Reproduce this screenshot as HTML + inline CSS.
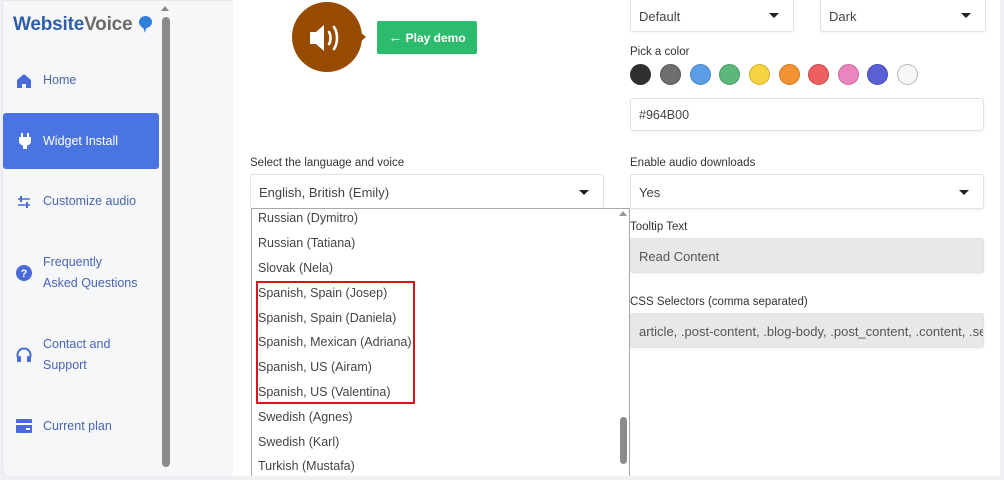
<!DOCTYPE html>
<html><head><meta charset="utf-8"><style>
*{box-sizing:border-box;margin:0;padding:0}
body{width:1004px;height:480px;overflow:hidden;background:#eef0f3;font-family:"Liberation Sans",sans-serif;position:relative;color:#333}
.a{position:absolute}
#card{left:2px;top:0;width:998px;height:477px;background:#f6f7f9;border-radius:0 0 8px 8px;overflow:hidden;border:1px solid #e6e8ec}
.nav{position:absolute;left:0;width:156px;color:#4a64b4;font-size:12.5px;line-height:21px}
.nav svg{position:absolute;left:13px}
.nav span{position:absolute;left:40px}
.main{left:233px;top:0;width:767px;height:476px;background:#fff}
.sel{position:absolute;border:1px solid #e2e2e2;border-radius:3px;background:#fff;font-size:13px;color:#444;padding-left:8px;box-shadow:0 1px 2px rgba(0,0,0,.06)}
.sel i{position:absolute;right:14px;top:50%;margin-top:-2px;border-left:5px solid transparent;border-right:5px solid transparent;border-top:5px solid #222}
.lbl{position:absolute;font-size:11.5px;color:#333}
.dot{position:absolute;top:64px;width:21px;height:21px;border-radius:50%}
.li{position:absolute;left:258px;font-size:12.5px;color:#444}
</style></head><body>
<div id="card" class="a">
<div class="a" style="left:10px;top:13px;font-size:19px;font-weight:bold;letter-spacing:-.2px"><span style="color:#2f5fa8">Website</span><span style="color:#6b6b6b">Voice</span></div>
<svg class="a" style="left:136px;top:15px" width="13" height="17" viewBox="0 0 13 17"><path d="M6.5 0C3 0 0 2.6 0 6c0 3 2.6 5 4.5 6.5L6 17l1-4.6C10 11.5 13 9.5 13 6 13 2.6 10 0 6.5 0z" fill="#2f7fd6"/></svg>
<div class="a" style="left:158px;top:5px;border-left:4px solid transparent;border-right:4px solid transparent;border-bottom:5px solid #888"></div>
<div class="a" style="left:159px;top:16px;width:8px;height:450px;background:#8b8b8b;border-radius:4px"></div>
<div class="nav" style="top:69px"><svg width="16" height="16" viewBox="0 0 16 16" style="top:3px"><path d="M8 1L1 7v8h5v-4h4v4h5V7z" fill="#4a6ad8"/></svg><span>Home</span></div>
<div class="a" style="left:0;top:112px;width:156px;height:56px;background:#4a74e2;border-radius:3px"></div>
<div class="nav" style="top:130px;color:#fff"><svg width="14" height="16" viewBox="0 0 14 16" style="top:2px;left:15px"><path d="M3 0h2v4h4V0h2v4h2v4c0 3-2 4-4 4.5V16H5v-3.5C3 12 1 11 1 8V4h2z" fill="#fff"/></svg><span>Widget Install</span></div>
<div class="nav" style="top:190px"><svg width="16" height="14" viewBox="0 0 16 14" style="top:4px"><path d="M2 4h12M2 10h12" stroke="#4a6ad8" stroke-width="1.5"/><rect x="4" y="1" width="2" height="6" fill="#4a6ad8"/><rect x="10" y="7" width="2" height="6" fill="#4a6ad8"/></svg><span>Customize audio</span></div>
<div class="nav" style="top:251px"><svg width="16" height="16" viewBox="0 0 16 16" style="top:13px"><circle cx="8" cy="8" r="8" fill="#4a6ad8"/><text x="8" y="12" font-size="11" font-weight="bold" fill="#fff" text-anchor="middle" font-family="Liberation Sans">?</text></svg><span>Frequently<br>Asked Questions</span></div>
<div class="nav" style="top:333px"><svg width="16" height="16" viewBox="0 0 16 16" style="top:13px"><path d="M1.5 10V8a6.5 6.5 0 0113 0v2" stroke="#4a6ad8" stroke-width="2" fill="none"/><rect x="1" y="9" width="4" height="6" rx="1" fill="#4a6ad8"/><rect x="11" y="9" width="4" height="6" rx="1" fill="#4a6ad8"/></svg><span>Contact and<br>Support</span></div>
<div class="nav" style="top:415px"><svg width="16" height="14" viewBox="0 0 16 14" style="top:3px"><rect x="0" y="0" width="16" height="14" rx="1" fill="#4a6ad8"/><rect x="0" y="4" width="16" height="2" fill="#fff"/><rect x="10" y="9" width="4" height="2" fill="#fff"/></svg><span>Current plan</span></div>
</div>
<div class="a main"></div>
<div class="a" style="left:292px;top:2px;width:70px;height:70px;border-radius:50%;background:#964B00"></div>
<div class="a" style="left:360px;top:32px;border-top:5px solid transparent;border-bottom:5px solid transparent;border-left:6px solid #964B00"></div>
<svg class="a" style="left:308px;top:22px" width="36" height="32" viewBox="0 0 36 32"><path d="M2 10h6l8-7v26l-8-7H2z" fill="#fff"/><path d="M21 10c2 3 2 9 0 12M26 5c4 6 4 16 0 22" stroke="#fff" stroke-width="2.6" fill="none" stroke-linecap="round"/></svg>
<div class="a" style="left:377px;top:21px;width:100px;height:33px;background:#2dbb6e;border-radius:2px;color:#fff;font-size:12px;font-weight:bold;line-height:33px;text-align:center"><span style="font-size:14px;font-weight:normal">←</span> Play demo</div>
<div class="sel" style="left:630px;top:-2px;width:164px;height:34px;line-height:36px">Default<i></i></div>
<div class="sel" style="left:820px;top:-2px;width:166px;height:34px;line-height:36px">Dark<i></i></div>
<div class="lbl" style="left:630px;top:46px">Pick a color</div>
<div class="dot" style="left:630px;background:#2f2f2f"></div>
<div class="dot" style="left:660px;background:#6e6e6e;border:1px solid #555"></div>
<div class="dot" style="left:690px;background:#5c9ee6;border:1px solid #4a86c8"></div>
<div class="dot" style="left:719px;background:#5cb77a;border:1px solid #4a9a64"></div>
<div class="dot" style="left:749px;background:#f5d340;border:1px solid #d4b22c"></div>
<div class="dot" style="left:779px;background:#f39334;border:1px solid #cf7a26"></div>
<div class="dot" style="left:808px;background:#ef5f5f;border:1px solid #c84a4a"></div>
<div class="dot" style="left:838px;background:#ea85bd;border:1px solid #c86a9f"></div>
<div class="dot" style="left:867px;background:#5b5fd6;border:1px solid #4649b0"></div>
<div class="dot" style="left:897px;background:#f6f6f6;border:1px solid #bbb"></div>
<div class="sel" style="left:630px;top:98px;width:354px;height:33px;line-height:33px;font-size:12.5px">#964B00</div>
<div class="lbl" style="left:250px;top:157px">Select the language and voice</div>
<div class="sel" style="left:250px;top:174px;width:354px;height:35px;line-height:35px">English, British (Emily)<i></i></div>
<div class="lbl" style="left:630px;top:157px">Enable audio downloads</div>
<div class="sel" style="left:630px;top:174px;width:354px;height:35px;line-height:35px">Yes<i></i></div>
<div class="lbl" style="left:630px;top:221px">Tooltip Text</div>
<div class="sel" style="left:630px;top:238px;width:354px;height:35px;line-height:35px;background:#e8e8e8;color:#555">Read Content</div>
<div class="lbl" style="left:630px;top:296px">CSS Selectors (comma separated)</div>
<div class="sel" style="left:630px;top:313px;width:354px;height:35px;line-height:35px;background:#e8e8e8;color:#555;overflow:hidden;white-space:nowrap">article, .post-content, .blog-body, .post_content, .content, .se</div>
<div class="a" style="left:251px;top:208px;width:379px;height:272px;background:#fff;border:1px solid #a8a8a8"></div>
<div class="a" style="left:619px;top:211px;border-left:4px solid transparent;border-right:4px solid transparent;border-bottom:5px solid #999"></div>
<div class="a" style="left:620px;top:417px;width:7px;height:47px;background:#8b8b8b;border-radius:4px"></div>
<div class="li" style="top:211px">Russian (Dymitro)</div>
<div class="li" style="top:236px">Russian (Tatiana)</div>
<div class="li" style="top:261px">Slovak (Nela)</div>
<div class="li" style="top:286px">Spanish, Spain (Josep)</div>
<div class="li" style="top:311px">Spanish, Spain (Daniela)</div>
<div class="li" style="top:335px">Spanish, Mexican (Adriana)</div>
<div class="li" style="top:360px">Spanish, US (Airam)</div>
<div class="li" style="top:385px">Spanish, US (Valentina)</div>
<div class="li" style="top:410px">Swedish (Agnes)</div>
<div class="li" style="top:435px">Swedish (Karl)</div>
<div class="li" style="top:459px">Turkish (Mustafa)</div>
<div class="a" style="left:256px;top:281px;width:159px;height:123px;border:2px solid #d9141b"></div>
<div class="a" style="left:0;top:476px;width:1004px;height:4px;background:#eef0f3"></div>
</body></html>
